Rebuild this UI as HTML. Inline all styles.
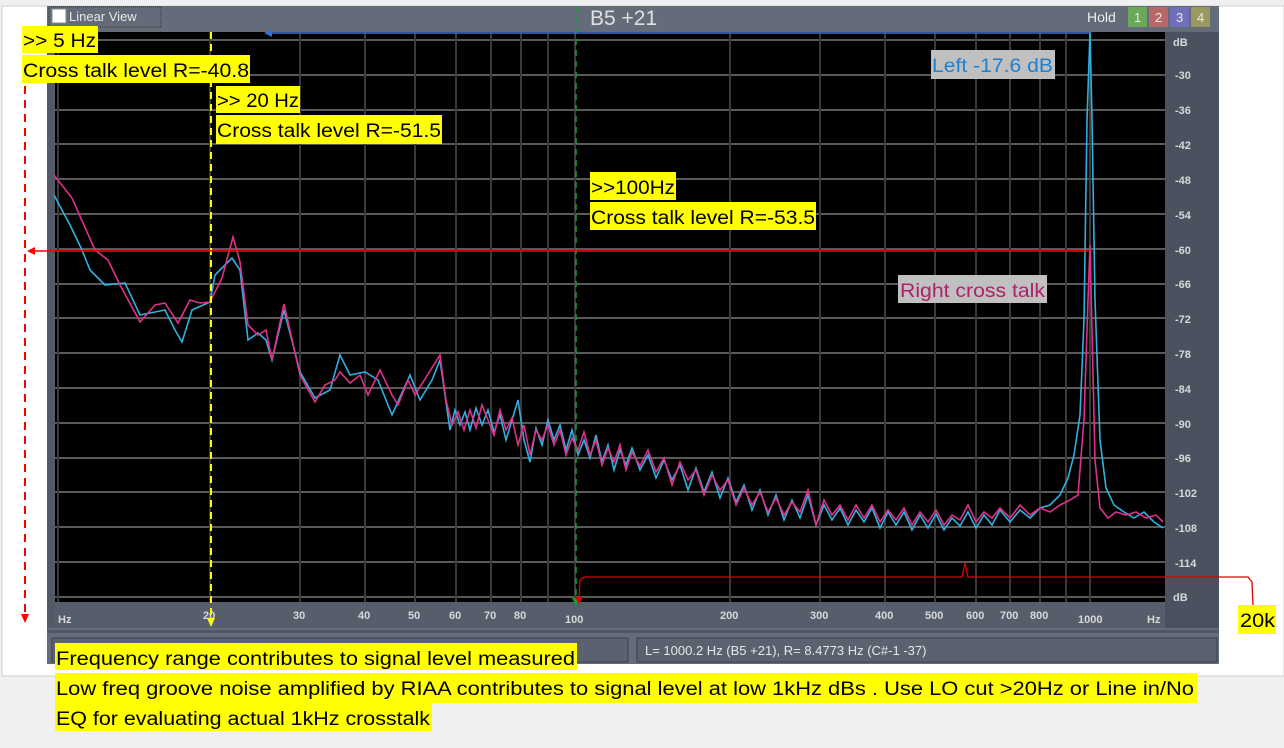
<!DOCTYPE html>
<html><head><meta charset="utf-8"><style>
html,body{margin:0;padding:0;width:1284px;height:748px;overflow:hidden;background:#f0f0f0}
svg{display:block}
.ax{font-family:"Liberation Sans",sans-serif;font-size:11px;fill:#d8d8d8;font-weight:bold}
.y{font-family:"Liberation Sans",sans-serif;font-size:19px;fill:#000}
</style></head><body>
<svg width="1284" height="748" viewBox="0 0 1284 748" xmlns="http://www.w3.org/2000/svg">
<rect x="0" y="0" width="1284" height="748" fill="#f0f0f0"/>
<rect x="2" y="6" width="1282" height="670" fill="#fff" stroke="#d0d0d0"/>
<rect x="47" y="6" width="1172" height="658" fill="#646c7a"/>
<rect x="55" y="32" width="1110" height="570" fill="#000"/>
<rect x="47" y="32" width="8" height="596" fill="#525a68"/>
<rect x="1165" y="32" width="54" height="596" fill="#4a5260"/>
<rect x="55" y="602" width="1110" height="26" fill="#565e6c"/>
<rect x="47" y="630" width="1172" height="3" fill="#505866"/>
<rect x="52" y="638" width="576" height="24" fill="#5a6270" stroke="#3a404a"/>
<rect x="637" y="638" width="580" height="24" fill="#5a6270" stroke="#3a404a"/>
<text x="645" y="655" font-family="Liberation Sans,sans-serif" font-size="13" fill="#e6e6e6">L= 1000.2 Hz (B5 +21), R= 8.4773 Hz (C#-1 -37)</text>
<rect x="52" y="9" width="14" height="14" fill="#fff" stroke="#888"/>
<rect x="49" y="7" width="112" height="20" fill="none" stroke="#333" stroke-dasharray="1,1"/>
<text x="69" y="21" font-family="Liberation Sans,sans-serif" font-size="13" fill="#e8e8e8">Linear View</text>
<text x="590" y="25" font-family="Liberation Sans,sans-serif" font-size="21" fill="#e0e0e0">B5 +21</text>
<text x="1087" y="22" font-family="Liberation Sans,sans-serif" font-size="14" fill="#eee">Hold</text>
<rect x="1128" y="7" width="19" height="20" fill="#6aa85a"/><text x="1134" y="22" font-family="Liberation Sans,sans-serif" font-size="13" fill="#e8e8e8">1</text>
<rect x="1149" y="7" width="19" height="20" fill="#b86868"/><text x="1155" y="22" font-family="Liberation Sans,sans-serif" font-size="13" fill="#e8e8e8">2</text>
<rect x="1170" y="7" width="19" height="20" fill="#7070b8"/><text x="1176" y="22" font-family="Liberation Sans,sans-serif" font-size="13" fill="#e8e8e8">3</text>
<rect x="1191" y="7" width="19" height="20" fill="#9a9a60"/><text x="1197" y="22" font-family="Liberation Sans,sans-serif" font-size="13" fill="#e8e8e8">4</text>
<g stroke="#5a5a5a" stroke-width="2">
<line x1="55" y1="40" x2="1165" y2="40"/><line x1="55" y1="75" x2="1165" y2="75"/><line x1="55" y1="110" x2="1165" y2="110"/><line x1="55" y1="144" x2="1165" y2="144"/><line x1="55" y1="179" x2="1165" y2="179"/><line x1="55" y1="214" x2="1165" y2="214"/><line x1="55" y1="249" x2="1165" y2="249"/><line x1="55" y1="284" x2="1165" y2="284"/><line x1="55" y1="318" x2="1165" y2="318"/><line x1="55" y1="353" x2="1165" y2="353"/><line x1="55" y1="388" x2="1165" y2="388"/><line x1="55" y1="423" x2="1165" y2="423"/><line x1="55" y1="458" x2="1165" y2="458"/><line x1="55" y1="492" x2="1165" y2="492"/><line x1="55" y1="527" x2="1165" y2="527"/><line x1="55" y1="562" x2="1165" y2="562"/><line x1="55" y1="597" x2="1165" y2="597"/>
</g>
<g stroke="#3a3a3a" stroke-width="2">
<line x1="58" y1="32" x2="58" y2="602"/><line x1="210" y1="32" x2="210" y2="602"/><line x1="300" y1="32" x2="300" y2="602"/><line x1="365" y1="32" x2="365" y2="602"/><line x1="415" y1="32" x2="415" y2="602"/><line x1="456" y1="32" x2="456" y2="602"/><line x1="491" y1="32" x2="491" y2="602"/><line x1="521" y1="32" x2="521" y2="602"/><line x1="548" y1="32" x2="548" y2="602"/><line x1="575" y1="32" x2="575" y2="602"/><line x1="730" y1="32" x2="730" y2="602"/><line x1="820" y1="32" x2="820" y2="602"/><line x1="885" y1="32" x2="885" y2="602"/><line x1="935" y1="32" x2="935" y2="602"/><line x1="976" y1="32" x2="976" y2="602"/><line x1="1010" y1="32" x2="1010" y2="602"/><line x1="1040" y1="32" x2="1040" y2="602"/><line x1="1066" y1="32" x2="1066" y2="602"/><line x1="1090" y1="32" x2="1090" y2="602"/>
</g>
<g class="ax">
<text x="1173" y="46">dB</text><text x="1175" y="79">-30</text><text x="1175" y="114">-36</text><text x="1175" y="149">-42</text><text x="1175" y="184">-48</text><text x="1175" y="219">-54</text><text x="1175" y="254">-60</text><text x="1175" y="288">-66</text><text x="1175" y="323">-72</text><text x="1175" y="358">-78</text><text x="1175" y="393">-84</text><text x="1175" y="428">-90</text><text x="1175" y="462">-96</text><text x="1175" y="497">-102</text><text x="1175" y="532">-108</text><text x="1175" y="567">-114</text><text x="1173" y="601">dB</text>
<text x="58" y="623">Hz</text><text x="203" y="619">20</text><text x="293" y="619">30</text><text x="358" y="619">40</text><text x="408" y="619">50</text><text x="449" y="619">60</text><text x="484" y="619">70</text><text x="514" y="619">80</text><text x="565" y="623">100</text><text x="720" y="619">200</text><text x="810" y="619">300</text><text x="875" y="619">400</text><text x="925" y="619">500</text><text x="966" y="619">600</text><text x="1000" y="619">700</text><text x="1030" y="619">800</text><text x="1078" y="623">1000</text><text x="1147" y="623">Hz</text>
</g>
<polyline fill="none" stroke="#30b0e0" stroke-width="1.6" points="54,195 70,225 82,250 90,270 105,285 125,283 140,315 165,310 175,330 182,342 192,310 210,302 215,275 222,268 232,258 240,270 248,340 258,333 266,340 272,360 284,310 300,372 315,398 330,390 340,355 350,375 365,372 378,380 392,415 410,375 420,400 432,380 440,360 445,395 450,430 455,410 460,425 465,412 470,430 476,408 482,425 488,410 494,432 500,415 506,440 512,420 518,400 524,440 530,462 536,428 542,445 548,420 554,440 560,425 566,450 572,430 578,455 584,440 590,458 596,435 602,462 608,445 614,470 620,450 626,465 632,448 640,470 648,455 656,478 664,460 672,480 680,465 688,490 696,468 704,492 712,472 720,498 728,478 736,502 744,485 752,510 760,490 768,515 776,495 784,520 792,500 800,518 808,495 816,525 824,505 832,520 840,508 848,525 856,510 864,522 872,508 880,528 888,512 896,525 904,512 912,530 920,515 928,528 936,514 944,530 952,518 960,526 968,512 976,528 984,515 992,525 1000,510 1010,522 1020,510 1030,518 1040,508 1050,505 1060,495 1068,478 1074,455 1080,415 1084,320 1087,120 1090,32 1092,120 1095,300 1100,440 1106,488 1114,505 1124,512 1134,518 1144,512 1154,522 1163,528"/>
<polyline fill="none" stroke="#e0308a" stroke-width="1.6" points="54,175 72,198 95,250 108,260 120,285 140,322 155,305 165,303 178,323 190,300 200,303 210,302 222,278 233,237 240,262 248,325 258,335 266,330 272,360 284,304 300,375 315,402 325,385 335,380 340,372 350,383 360,375 368,395 380,370 392,395 398,405 408,380 415,395 440,355 446,400 452,425 458,412 464,430 470,410 476,428 482,405 488,420 494,435 500,410 506,430 512,418 518,445 524,425 530,455 536,430 542,440 548,425 554,445 560,430 566,455 572,438 578,450 584,432 590,455 596,440 602,465 608,448 614,462 620,445 626,470 632,452 640,466 648,450 656,472 664,458 672,485 680,462 688,480 696,470 704,495 712,475 720,490 728,480 736,505 744,488 752,505 760,492 768,512 776,498 784,515 792,502 800,512 808,490 816,525 824,500 832,515 840,505 848,520 856,505 864,518 872,505 880,522 888,510 896,520 904,508 912,525 920,512 928,522 936,510 944,525 952,515 960,520 968,505 976,522 984,512 992,518 1000,508 1010,518 1020,505 1030,515 1040,508 1050,512 1060,505 1070,500 1078,495 1084,420 1088,300 1090,245 1092,330 1095,460 1100,508 1108,518 1116,512 1126,515 1136,512 1146,518 1156,515 1163,522"/>
<line x1="576" y1="6" x2="576" y2="604" stroke="#1a9a40" stroke-width="1.5" stroke-dasharray="6,5"/>
<polygon points="572,598 580,598 576,606" fill="#1a9a40"/>
<line x1="211" y1="32" x2="211" y2="622" stroke="#ffff00" stroke-width="2" stroke-dasharray="7,5"/>
<polygon points="207,618 215,618 211,627" fill="#ffff00"/>
<line x1="270" y1="33" x2="1090" y2="33" stroke="#3a70c8" stroke-width="1.5"/>
<polygon points="264,33 272,29 272,37" fill="#3a70c8"/>
<line x1="32" y1="251" x2="1090" y2="251" stroke="#ff0000" stroke-width="1.5"/>
<polygon points="27,251 35,247 35,255" fill="#ff0000"/>
<line x1="25" y1="30" x2="25" y2="616" stroke="#ff0000" stroke-width="2" stroke-dasharray="8,6"/>
<polygon points="21,614 29,614 25,623" fill="#ff0000"/>
<polyline fill="none" stroke="#e00000" stroke-width="1.3" points="579,600 580,580 584,577 962,577 965,563 968,577 1248,577 1252,582 1253,605"/>
<polygon points="575,597 583,597 579,604" fill="#e00000"/>
<g lengthAdjust="spacingAndGlyphs">
<rect x="22" y="26" width="76" height="27" fill="#ffff00"/><text class="y" x="23" y="47" textLength="73" lengthAdjust="spacingAndGlyphs">&gt;&gt; 5 Hz</text>
<rect x="22" y="55" width="228" height="28" fill="#ffff00"/><text class="y" x="23" y="77" textLength="226" lengthAdjust="spacingAndGlyphs">Cross talk level R=-40.8</text>
<rect x="216" y="86" width="84" height="27" fill="#ffff00"/><text class="y" x="217" y="107" textLength="82" lengthAdjust="spacingAndGlyphs">&gt;&gt; 20 Hz</text>
<rect x="216" y="115" width="226" height="29" fill="#ffff00"/><text class="y" x="217" y="137" textLength="224" lengthAdjust="spacingAndGlyphs">Cross talk level R=-51.5</text>
<rect x="590" y="172" width="86" height="28" fill="#ffff00"/><text class="y" x="591" y="194" textLength="84" lengthAdjust="spacingAndGlyphs">&gt;&gt;100Hz</text>
<rect x="590" y="202" width="226" height="28" fill="#ffff00"/><text class="y" x="591" y="224" textLength="224" lengthAdjust="spacingAndGlyphs">Cross talk level R=-53.5</text>
<rect x="931" y="50" width="124" height="29" fill="#c0c0c0"/><text x="932" y="72" font-family="Liberation Sans,sans-serif" font-size="19" fill="#1f80d0" textLength="121" lengthAdjust="spacingAndGlyphs">Left -17.6 dB</text>
<rect x="898" y="275" width="149" height="28" fill="#c0c0c0"/><text x="900" y="297" font-family="Liberation Sans,sans-serif" font-size="19" fill="#b0206a" textLength="145" lengthAdjust="spacingAndGlyphs">Right cross talk</text>
<rect x="1238" y="605" width="38" height="29" fill="#ffff00"/><text class="y" x="1240" y="627" textLength="35" lengthAdjust="spacingAndGlyphs">20k</text>
<rect x="55" y="643" width="522" height="27" fill="#ffff00"/><text class="y" x="56" y="665" textLength="519" lengthAdjust="spacingAndGlyphs">Frequency range contributes to signal level measured</text>
<rect x="55" y="673" width="1142" height="30" fill="#ffff00"/><text class="y" x="56" y="695" textLength="1138" lengthAdjust="spacingAndGlyphs">Low freq groove noise amplified by RIAA contributes to  signal level at low 1kHz dBs . Use LO cut &gt;20Hz or Line in/No</text>
<rect x="55" y="703" width="377" height="28" fill="#ffff00"/><text class="y" x="56" y="725" textLength="374" lengthAdjust="spacingAndGlyphs">EQ for evaluating actual 1kHz crosstalk</text>
</g>
</svg>
</body></html>
